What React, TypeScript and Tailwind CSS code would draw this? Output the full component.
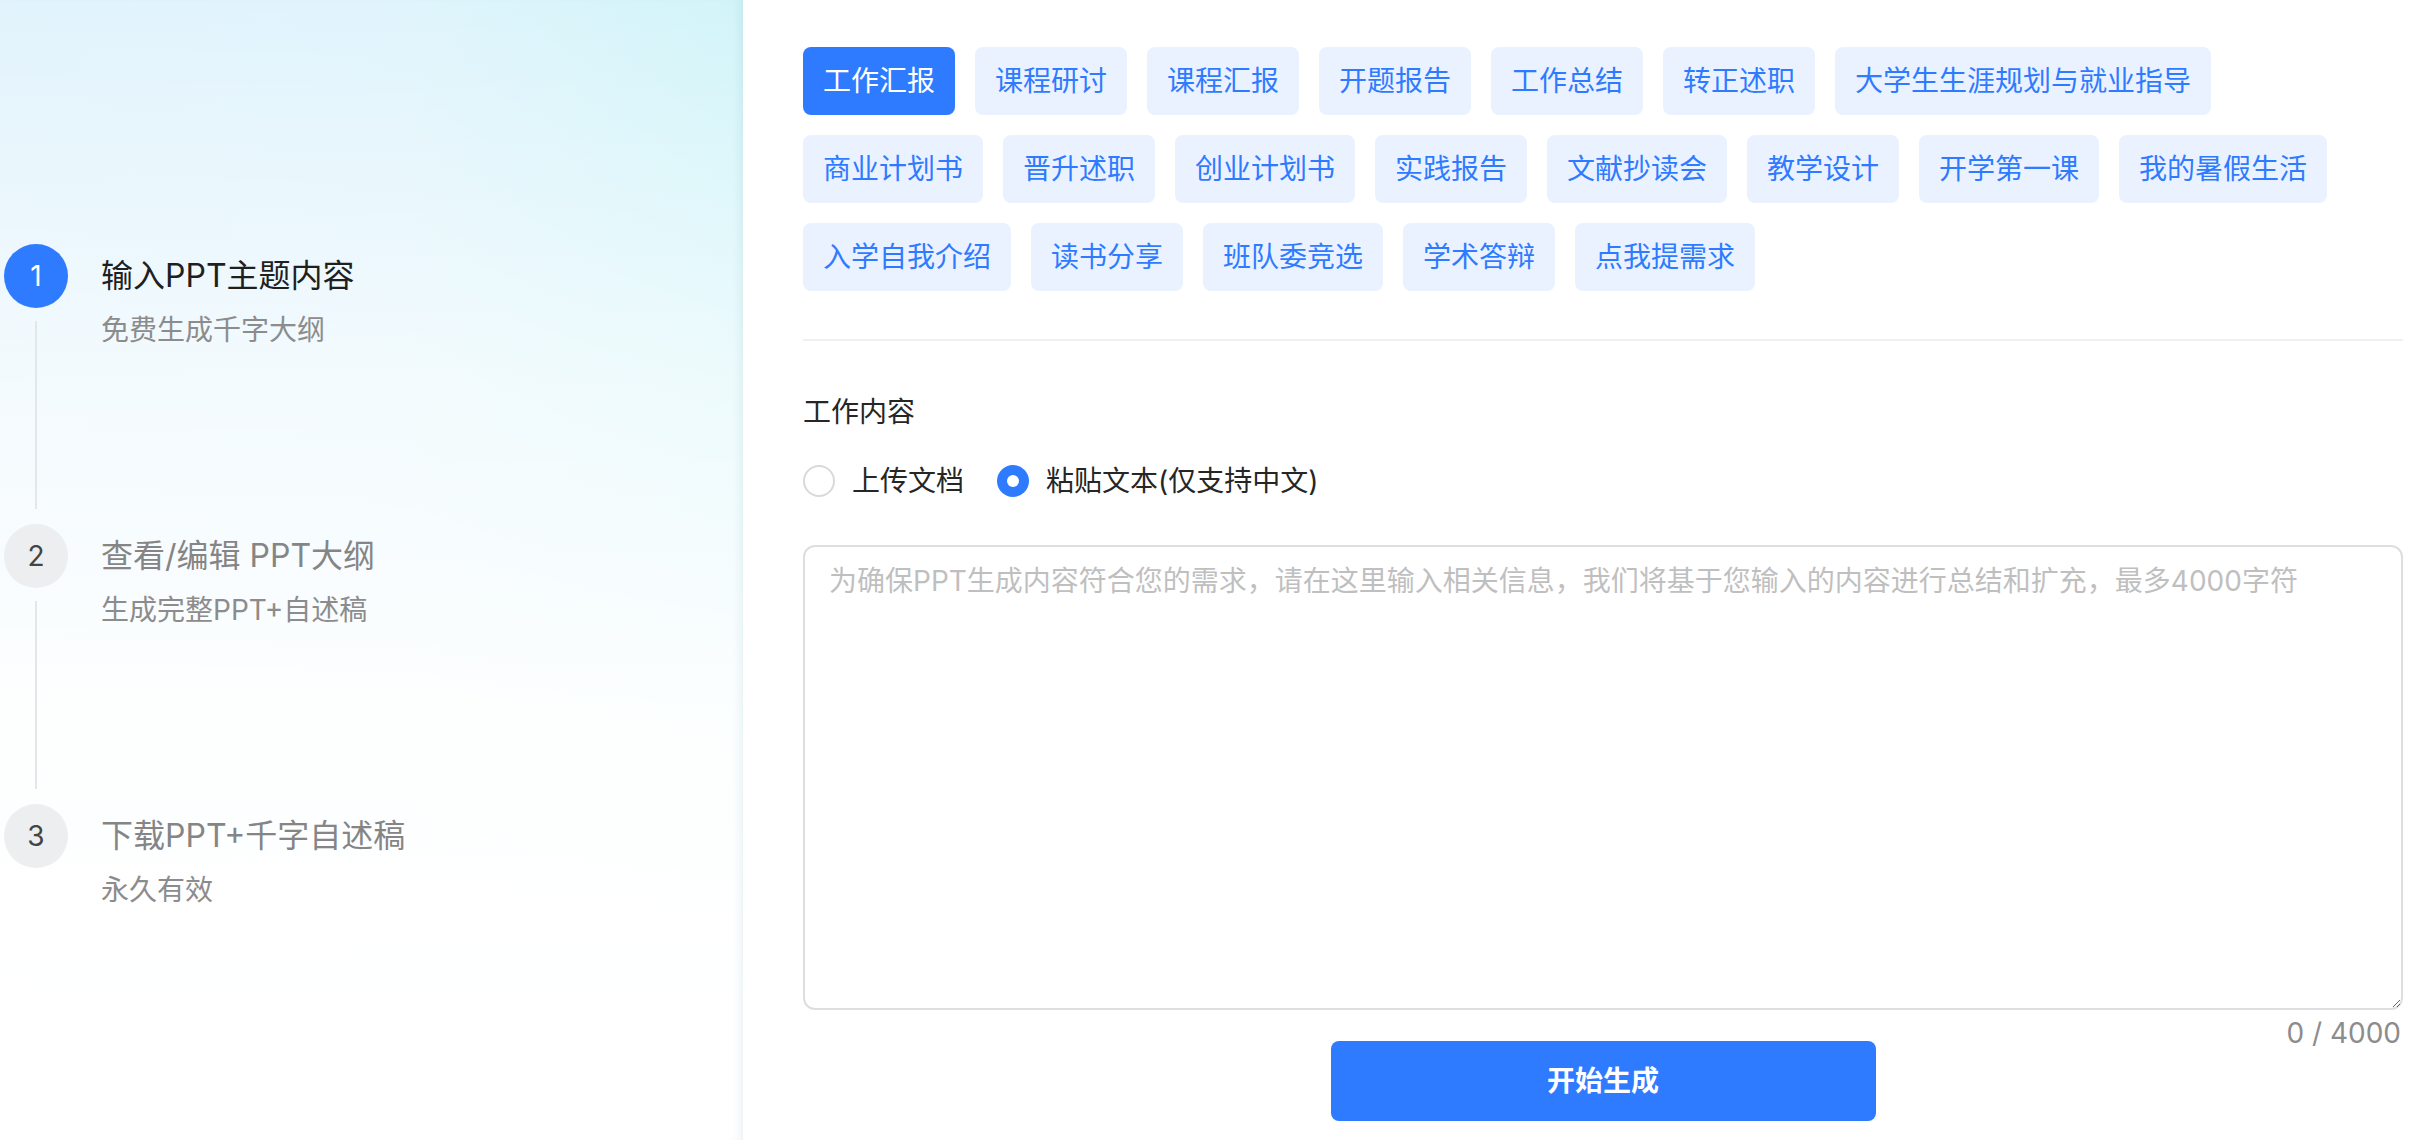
import React from "react";

const tagsAll = [
  "工作汇报",
  "课程研讨",
  "课程汇报",
  "开题报告",
  "工作总结",
  "转正述职",
  "大学生生涯规划与就业指导",
  "商业计划书",
  "晋升述职",
  "创业计划书",
  "实践报告",
  "文献抄读会",
  "教学设计",
  "开学第一课",
  "我的暑假生活",
  "入学自我介绍",
  "读书分享",
  "班队委竞选",
  "学术答辩",
  "点我提需求",
];

const steps = [
  { n: "1", title: "输入PPT主题内容", sub: "免费生成千字大纲", active: true },
  { n: "2", title: "查看/编辑 PPT大纲", sub: "生成完整PPT+自述稿", active: false },
  { n: "3", title: "下载PPT+千字自述稿", sub: "永久有效", active: false },
];

export default function App() {
  return (
    <div className="flex h-[1140px] w-[2434px] overflow-hidden bg-white font-['Inter','Noto_Sans_CJK_SC',sans-serif]">
      {/* Left panel */}
      <div className="relative z-10 w-[743px] shrink-0 bg-[linear-gradient(180deg,rgba(255,255,255,0)_0%,rgba(255,255,255,0.6)_33%,rgba(255,255,255,0.92)_62%,#ffffff_88%),linear-gradient(90deg,#e2f3fc_0%,#e0f4fc_55%,#d2f4f9_100%)] shadow-[inset_-8px_0_10px_-6px_rgba(60,140,160,0.12)]">
        <div className="flex flex-col pl-[4px] pt-[244px]">
          {steps.map((s, i) => (
            <div key={s.n} className={i < 2 ? "flex h-[280px]" : "flex"}>
              <div className="flex w-[64px] flex-col items-center">
                <div
                  className={
                    s.active
                      ? "flex h-[64px] w-[64px] items-center justify-center rounded-full bg-[#2f7bff] text-[28px] text-white"
                      : "flex h-[64px] w-[64px] items-center justify-center rounded-full bg-[#eceef0] text-[28px] text-[#444]"
                  }
                >
                  {s.n}
                </div>
                {i < 2 && <div className="mb-[15px] mt-[13px] w-[2px] flex-1 bg-[#e4e6e8]" />}
              </div>
              <div className="ml-[33px] flex flex-col">
                <div
                  className={
                    s.active
                      ? "flex h-[64px] items-center text-[32px] text-[#1f1f1f]"
                      : "flex h-[64px] items-center text-[32px] text-[#858585]"
                  }
                >
                  {s.title}
                </div>
                <div className="mt-[2px] text-[28px] leading-[40px] text-[#8c8c8c]">{s.sub}</div>
              </div>
            </div>
          ))}
        </div>
      </div>

      {/* Right panel */}
      <div className="flex flex-1 flex-col pl-[60px] pr-[31px] pt-[47px]">
        <div className="flex flex-wrap gap-[20px]">
          {tagsAll.map((t, i) => (
            <div
              key={t}
              className={
                i === 0
                  ? "flex h-[68px] items-center rounded-[8px] bg-[#2f7bff] px-[20px] text-[28px] text-white"
                  : "flex h-[68px] items-center rounded-[8px] bg-[#eaf2ff] px-[20px] text-[28px] text-[#2f7bff]"
              }
            >
              {t}
            </div>
          ))}
        </div>

        <div className="mt-[48px] h-[2px] w-full bg-[#f0f0f0]" />

        <div className="mt-[51px] text-[28px] leading-[40px] text-[#262626]">工作内容</div>

        <div className="mt-[29px] flex h-[40px] items-center">
          <div className="flex items-center">
            <span className="h-[32px] w-[32px] rounded-full border-2 border-[#d9d9d9] bg-white" />
            <span className="ml-[17px] text-[28px] text-[#262626]">上传文档</span>
          </div>
          <div className="ml-[33px] flex items-center">
            <span className="flex h-[32px] w-[32px] items-center justify-center rounded-full bg-[#2f7bff]">
              <span className="h-[12px] w-[12px] rounded-full bg-white" />
            </span>
            <span className="ml-[17px] text-[28px] text-[#262626]">粘贴文本(仅支持中文)</span>
          </div>
        </div>

        <div className="relative mt-[44px]">
          <textarea
            className="block h-[465px] w-full rounded-[12px] border-2 border-[#dedede] bg-white px-[24px] pt-[14px] text-[28px] leading-[40px] text-[#262626] outline-none placeholder:text-[#bfbfbf]"
            placeholder="为确保PPT生成内容符合您的需求，请在这里输入相关信息，我们将基于您输入的内容进行总结和扩充，最多4000字符"
          />
          <div className="absolute right-[2px] top-[calc(100%+3px)] text-[28px] leading-[40px] text-[#8c8c8c]">
            0 / 4000
          </div>
        </div>

        <button className="mx-auto mt-[31px] flex h-[80px] w-[545px] items-center justify-center rounded-[8px] bg-[#2f7bff] text-[28px] font-semibold text-white">
          开始生成
        </button>
      </div>
    </div>
  );
}
